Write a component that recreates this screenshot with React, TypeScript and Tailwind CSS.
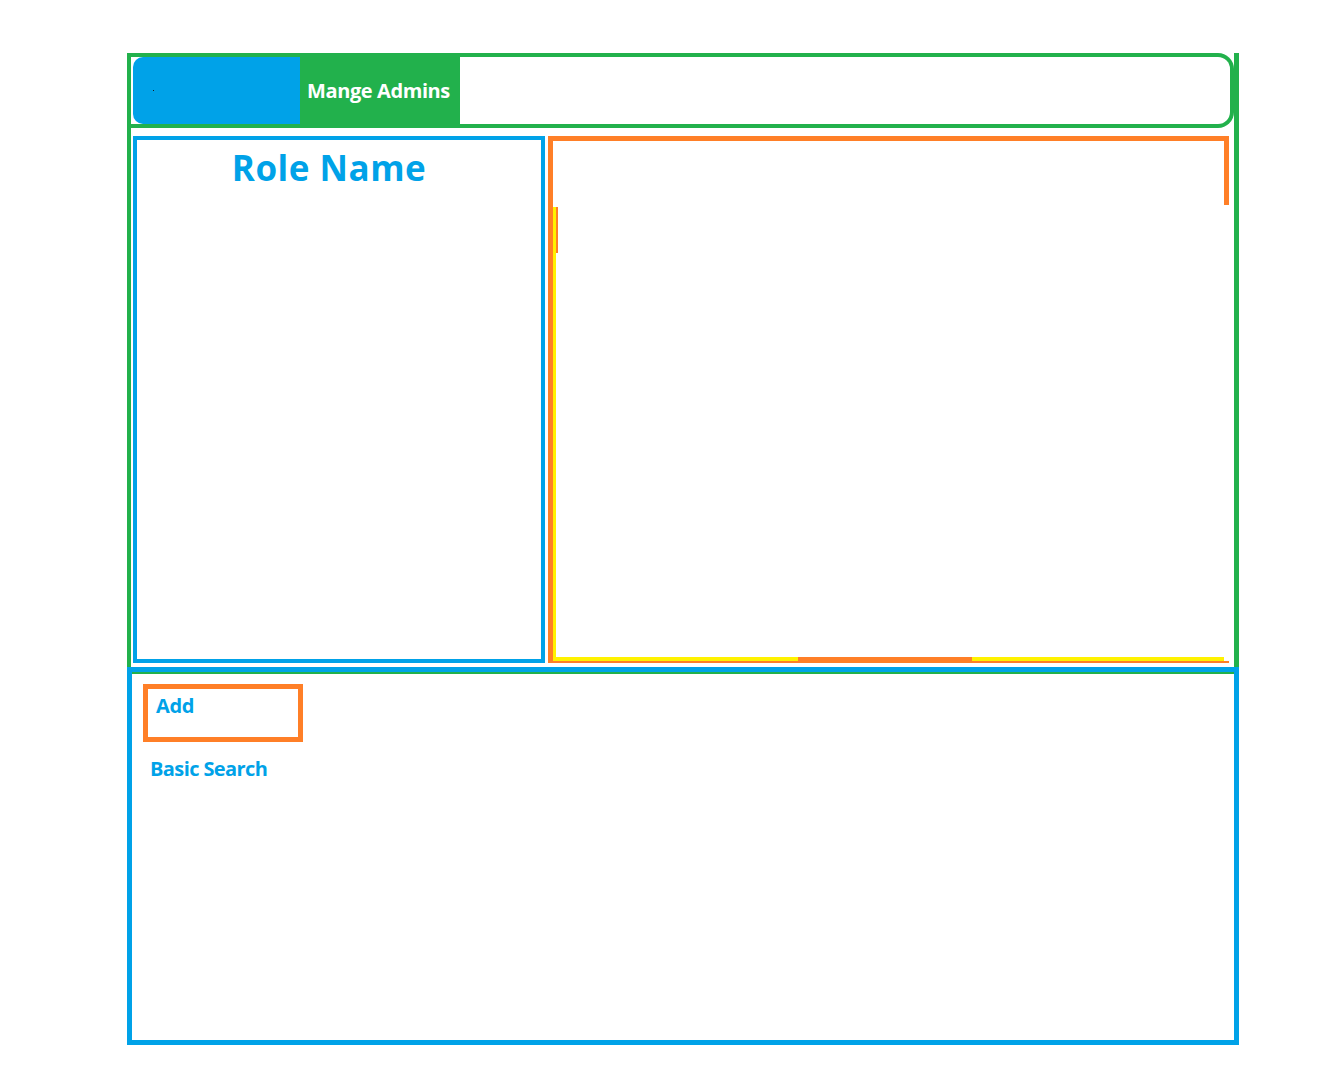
import React from 'react';

const font = { fontFamily: '"Open Sans", Lato, sans-serif' };

function Header() {
  return (
    <div className="flex h-[75px] border-y-4 border-r-4 border-[#22b14c] rounded-r-[16px]">
      <div className="ml-[2px] w-[167px] bg-[#00a2e8] rounded-l-[10px] flex items-center pl-[20px]">
        <span className="block w-[1px] h-[1px] bg-[#1a1a1a]" />
      </div>
      <div className="w-[160px] bg-[#22b14c] flex items-center pl-[7px]">
        <span className="text-[20px] font-bold text-white leading-none tracking-[-0.4px]">Mange Admins</span>
      </div>
    </div>
  );
}

function RolePanel() {
  return (
    <div className="w-[412px] border-4 border-[#00a2e8] pt-[7px] pr-[20px] text-center">
      <h1 className="text-[35px] leading-[42px] font-bold text-[#00a2e8] tracking-[0.5px]">Role Name</h1>
    </div>
  );
}

function DetailPanel() {
  return (
    <div className="w-[681px] flex border-t-[5px] border-l-[5px] border-b-[2px] border-[#ff7f27]">
      <div className="flex-1 flex flex-col">
        <div className="h-[66px]" />
        <div className="flex-1 flex border-l-[3px] border-[#fff200]">
          <div className="w-[2px] h-[46px] bg-[#ff7f27]" />
        </div>
        <div className="flex h-[4px]">
          <div className="w-[245px] bg-[#fff200]" />
          <div className="w-[174px] bg-[#ff7f27]" />
          <div className="flex-1 bg-[#fff200]" />
        </div>
      </div>
      <div className="w-[5px]">
        <div className="h-[64px] bg-[#ff7f27]" />
      </div>
    </div>
  );
}

export default function App() {
  return (
    <div className="min-h-screen bg-white pt-[53px] pl-[127px]" style={font}>
      <div className="w-[1112px]">
        {/* Admin section */}
        <div className="h-[614px] border-l-4 border-r-[5px] border-[#22b14c]">
          <Header />
          <div className="flex gap-[3px] mt-[8px] pl-[2px] h-[527px]">
            <RolePanel />
            <DetailPanel />
          </div>
        </div>

        {/* Search section */}
        <div className="h-[378px] border-[5px] border-[#00a2e8]">
          <div className="h-[2px] bg-[#22b14c]" />
          <div className="ml-[11px] mt-[10px] w-[160px] h-[58px] border-[5px] border-[#ff7f27] pl-[8px] pt-[5px]">
            <span className="text-[20px] leading-[24px] font-bold text-[#00a2e8] tracking-[-0.4px]">Add</span>
          </div>
          <div className="ml-[18px] mt-[15px] text-[20px] leading-[24px] font-bold text-[#00a2e8] tracking-[-0.6px]">
            Basic Search
          </div>
        </div>
      </div>
    </div>
  );
}
